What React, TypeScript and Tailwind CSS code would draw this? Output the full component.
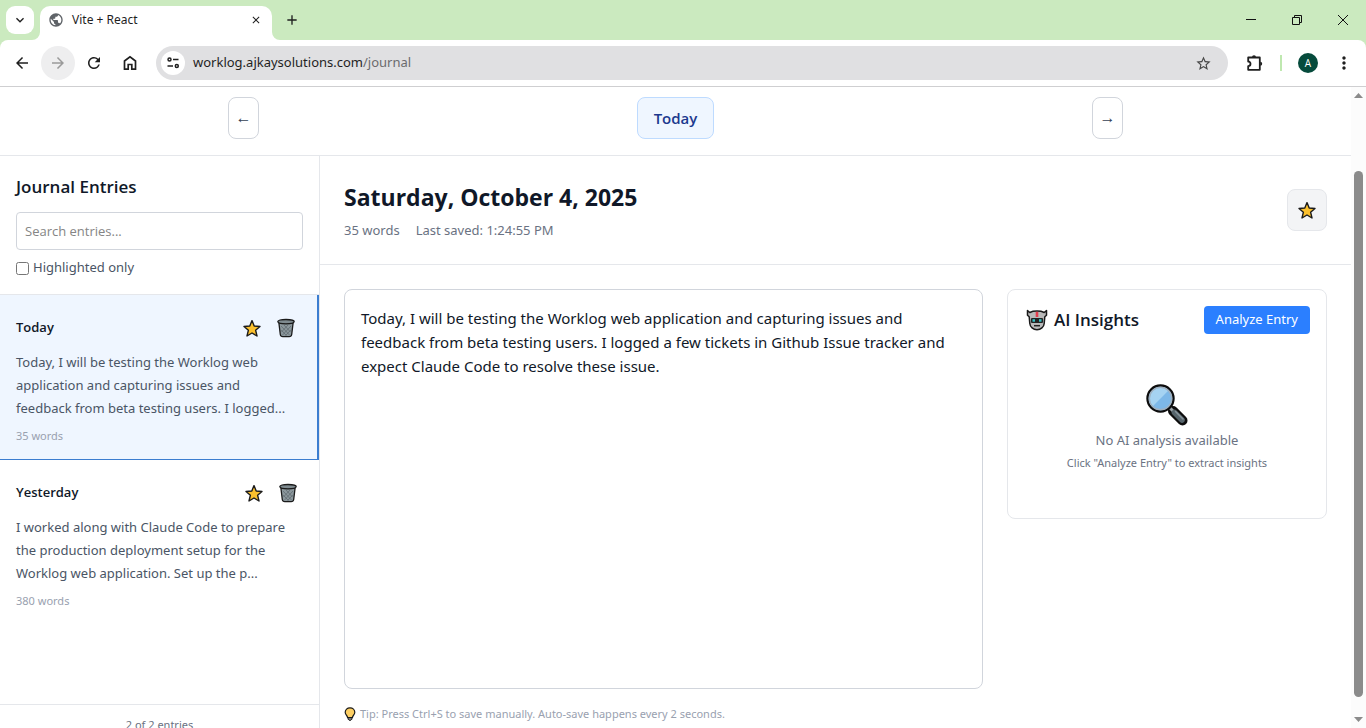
import { useState } from "react";
import {
  MdArrowBack,
  MdArrowForward,
  MdRefresh,
  MdMoreVert,
  MdPublic,
  MdStarBorder,
  MdAdd,
  MdClose,
  MdKeyboardArrowDown,
} from "react-icons/md";

function StarIcon({ className = "size-5" }: { className?: string }) {
  return (
    <svg viewBox="0 0 20 20" className={className} aria-hidden="true">
      <path
        d="M10 2.600 12.200 8 18 8.500 13.600 12.200 15 18 10 15 5 18 6.400 12.200 2 8.500 7.800 8Z"
        fill="#fbc02d"
        stroke="#1a1a1a"
        strokeWidth="1.4"
        strokeLinejoin="round"
      />
    </svg>
  );
}

function TrashIcon() {
  return (
    <svg viewBox="0 0 20 20" className="size-5" aria-hidden="true">
      <path d="M2.900 5 4.300 16.500c.2 1.300 1.200 2.100 2.500 2.100h6.400c1.300 0 2.300-.8 2.500-2.100L17.100 5Z" fill="#8b979c" stroke="#1a1a1a" strokeWidth="1.300" />
      <path d="m5 8 8.500 9M8 7l6.500 7M5.200 12l5.200 5.500M15 8l-8.500 9M12 7l-6.500 7M14.800 12l-5.200 5.500" stroke="#5b666b" strokeWidth=".7" fill="none" />
      <path d="M1.800 3.600C1.800 2.300 5 1.500 10 1.500s8.200.8 8.200 2.100c0 1.400-2.500 2.200-8.200 2.200s-8.200-.8-8.200-2.200Z" fill="#7f8b90" stroke="#1a1a1a" strokeWidth="1.300" />
    </svg>
  );
}

function RobotIcon() {
  return (
    <svg viewBox="0 0 22 22" className="size-[22px]" aria-hidden="true">
      <path
        d="M1.500 1.600v4.600l1.700 1.600.6 6.700c.3 3.500 3.400 6.200 7.200 6.200s6.900-2.700 7.200-6.200l.6-6.700 1.700-1.600V1.600l-2.300 1.900C16 2.400 13.800 2.100 11 2.100s-5 .3-7.200 1.400Z"
        fill="#b9b9b9"
        stroke="#1a1a1a"
        strokeWidth="1.500"
        strokeLinejoin="round"
      />
      <path d="M11 2.800v5.200" stroke="#e53e4e" strokeWidth="2.600" />
      <rect x="5" y="9" width="12" height="5" rx="1" fill="#222" />
      <rect x="6.500" y="10.200" width="2.500" height="2.500" fill="#35c3c8" />
      <rect x="13" y="10.200" width="2.500" height="2.500" fill="#35c3c8" />
      <path d="M8 16.700h6" stroke="#222" strokeWidth="1.500" />
    </svg>
  );
}

function MagnifierIcon() {
  return (
    <svg viewBox="0 0 42 42" className="size-[42px]" aria-hidden="true">
      <path d="m27 27 9.500 9.500" stroke="#0d0d0d" strokeWidth="10" strokeLinecap="round" />
      <path d="m22 22 5 5" stroke="#0d0d0d" strokeWidth="6" />
      <path d="m22.500 22.500 5 5" stroke="#9aa3a8" strokeWidth="3" />
      <path d="m28.500 28.500 7.500 7.500" stroke="#56646b" strokeWidth="5.600" strokeLinecap="round" />
      <path d="m29.500 27.500 7.500 7.500" stroke="#859299" strokeWidth="1.500" strokeLinecap="round" />
      <circle cx="14.500" cy="14.500" r="13" fill="#7db8e8" stroke="#0d0d0d" strokeWidth="2.400" />
      <path d="M6.300 22.700A11.600 11.600 0 0 1 22.700 6.300Z" fill="#a5d3f2" />
      <circle cx="14.500" cy="14.500" r="11.200" fill="none" stroke="#9fb0bf" strokeWidth="1.500" />
    </svg>
  );
}

function BulbIcon() {
  return (
    <svg viewBox="0 0 12 14" className="h-3.5 w-3" aria-hidden="true">
      <path
        d="M6 .8C3.200.800 1.200 2.800 1.200 5.300c0 2.200 1.900 3.100 2.400 5.200h4.800c.5-2.100 2.400-3 2.400-5.200C10.800 2.800 8.800.8 6 .8Z"
        fill="#fdcf63"
        stroke="#1a1a1a"
        strokeWidth="1.200"
      />
      <path d="M4 10.500h4v1.600L6.800 13.300H5.200L4 12.100Z" fill="#777" stroke="#1a1a1a" strokeWidth="1" />
    </svg>
  );
}

function HomeIcon() {
  return (
    <svg viewBox="0 0 18 18" className="size-[18px]" fill="none" stroke="#1f1f1f" strokeWidth="1.700" aria-hidden="true">
      <path d="M3.500 7v8.200h3.700v-4.700h3.600v4.700h3.700V7L9 2.800Z" />
    </svg>
  );
}

function SiteIcon() {
  return (
    <svg viewBox="0 0 16 16" className="size-4" fill="none" stroke="#1f1f1f" strokeWidth="1.500" aria-hidden="true">
      <circle cx="4.500" cy="4.500" r="1.500" />
      <path d="M8 4.500h5.500M2.500 11h5.500" />
      <circle cx="11.800" cy="11" r="1.500" />
    </svg>
  );
}

function PuzzleIcon() {
  return (
    <svg viewBox="0 0 20 20" className="size-5" aria-hidden="true">
      <path d="M3.200 4.500h11.600v12.300H3.200v-3.700a2.200 2.200 0 0 0 0-4.600Z" fill="none" stroke="#1f1f1f" strokeWidth="1.800" strokeLinejoin="round" />
      <path d="M7 4.200a2 2 0 0 1 4 0ZM15.200 8.800a2 2 0 0 1 0 4Z" fill="#1f1f1f" />
    </svg>
  );
}

function TabStrip() {
  return (
    <div className="flex h-10 shrink-0 items-end justify-between bg-[#cbeabf]">
      <div className="flex h-[34px] pl-1.5">
        <button aria-label="Search tabs" className="flex size-7 items-center justify-center rounded-[9px] bg-white">
          <MdKeyboardArrowDown className="size-4 text-[#1f1f1f]" />
        </button>
        <div className="relative ml-1.5 flex w-[232px] items-center rounded-t-[10px] bg-white pr-2.5 pb-1.5 pl-2">
          <svg viewBox="0 0 8 8" className="absolute bottom-0 -left-2 size-2" aria-hidden="true">
            <path d="M8 0v8H0a8 8 0 0 0 8-8" fill="#fff" />
          </svg>
          <svg viewBox="0 0 8 8" className="absolute -right-2 bottom-0 size-2" aria-hidden="true">
            <path d="M0 0v8h8A8 8 0 0 1 0 0" fill="#fff" />
          </svg>
          <MdPublic className="size-4 text-[#5f6368]" />
          <span className="ml-2 grow font-['Noto_Sans',sans-serif] text-[12px] text-[#1f1f1f]">Vite + React</span>
          <button aria-label="Close tab">
            <MdClose className="size-3 text-[#1f1f1f]" />
          </button>
        </div>
        <button aria-label="New tab" className="ml-3 flex h-7 items-center">
          <MdAdd className="size-4 text-[#1f1f1f]" />
        </button>
      </div>
      <div className="flex h-10 text-[#111]">
        <button aria-label="Minimize" className="flex w-[46px] items-center justify-center">
          <svg viewBox="0 0 10 10" className="size-2.5" stroke="currentColor"><path d="M0 4.500h10" /></svg>
        </button>
        <button aria-label="Restore" className="flex w-[46px] items-center justify-center">
          <svg viewBox="0 0 10 10" className="size-2.5" stroke="currentColor" fill="none"><path d="M.5 2.500h7v7h-7ZM2.500 2.500v-2h7v7h-2" /></svg>
        </button>
        <button aria-label="Close" className="flex w-[46px] items-center justify-center">
          <svg viewBox="0 0 10 10" className="size-2.5" stroke="currentColor"><path d="m0 0 10 10M10 0 0 10" /></svg>
        </button>
      </div>
    </div>
  );
}

function Toolbar() {
  return (
    <div className="shrink-0 bg-[#cbeabf]">
      <div className="flex h-[47px] items-center rounded-t-lg border-b border-[#cfcfd1] bg-white pr-3 pl-[5px] text-[#1f1f1f]">
        <button aria-label="Back" className="flex size-[34px] items-center justify-center">
          <MdArrowBack className="size-[18px]" />
        </button>
        <button aria-label="Forward" className="ml-0.5 flex size-[34px] items-center justify-center rounded-full bg-[#eeeeef] text-[#9a9a9a]">
          <MdArrowForward className="size-[18px]" />
        </button>
        <button aria-label="Reload" className="ml-0.5 flex size-[34px] items-center justify-center">
          <MdRefresh className="size-[18px]" />
        </button>
        <button aria-label="Home" className="ml-0.5 flex size-[34px] items-center justify-center">
          <HomeIcon />
        </button>
        <div className="ml-[9px] flex h-[34px] grow items-center rounded-full bg-[#e0e0e2] pr-4 pl-[5px]">
          <button aria-label="Site information" className="flex size-6 items-center justify-center rounded-full bg-white">
            <SiteIcon />
          </button>
          <a href="/journal" className="ml-2 grow font-['Noto_Sans',sans-serif] text-[13px] text-[#1f1f1f]">
            worklog.ajkaysolutions.com<span className="text-[#6b6b6e]">/journal</span>
          </a>
          <button aria-label="Bookmark">
            <MdStarBorder className="size-[17px] text-[#474747]" />
          </button>
        </div>
        <button aria-label="Extensions" className="ml-[17px]">
          <PuzzleIcon />
        </button>
        <span className="ml-[15px] h-4 w-0.5 bg-[#bfe8b0]" />
        <button aria-label="Profile" className="ml-4 flex size-5 items-center justify-center rounded-full bg-[#064b3c] text-[10px] text-white">
          A
        </button>
        <button aria-label="Menu" className="ml-4">
          <MdMoreVert className="size-5" />
        </button>
      </div>
    </div>
  );
}

const entries = [
  {
    day: "Today",
    text: ["Today, I will be testing the Worklog web", "application and capturing issues and", "feedback from beta testing users. I logged..."],
    words: 35,
    active: true,
  },
  {
    day: "Yesterday",
    text: ["I worked along with Claude Code to prepare", "the production deployment setup for the", "Worklog web application. Set up the p..."],
    words: 380,
    active: false,
  },
];

function Sidebar() {
  const [query, setQuery] = useState("");
  return (
    <aside className="flex w-80 shrink-0 flex-col border-r border-gray-200">
      <div className="border-b border-gray-200 p-4">
        <h2 className="text-[17px] leading-[30px] font-semibold text-gray-900">Journal Entries</h2>
        <input
          type="text"
          aria-label="Search entries"
          placeholder="Search entries..."
          value={query}
          onChange={(e) => setQuery(e.target.value)}
          className="mt-2.5 block h-[38px] w-full rounded border border-gray-300 px-2 text-[13px] placeholder:text-[#858585]"
        />
        <label className="mt-2 flex h-5 items-center gap-1 font-['Noto_Sans',sans-serif] text-[13px] text-gray-600">
          <input type="checkbox" className="size-[13px]" />
          Highlighted only
        </label>
      </div>
      <ul className="grow">
        {entries.map((entry) => (
          <li
            key={entry.day}
            className={
              entry.active
                ? "border-r-2 border-b border-[#3b7dd0] bg-blue-50 px-4 pt-4 pb-[15px]"
                : "px-4 pt-4 pb-[15px]"
            }
          >
            <div className="flex h-[33px] items-center justify-between">
              <h3 className="text-[13px] font-semibold text-gray-900">{entry.day}</h3>
              <div className="flex gap-1.5 pr-px">
                <button aria-label="Highlight entry" className="flex h-8 w-7 items-center justify-center">
                  <StarIcon />
                </button>
                <button aria-label="Delete entry" className="flex h-8 w-7 items-center justify-center">
                  <TrashIcon />
                </button>
              </div>
            </div>
            <p className="mt-[7px] font-['Noto_Sans',sans-serif] text-[13px] leading-[23px] whitespace-pre text-gray-600">
              {entry.text.join("\n")}
            </p>
            <p className="mt-2 font-['Noto_Sans',sans-serif] text-[11px] leading-4 text-gray-400">{entry.words} words</p>
          </li>
        ))}
      </ul>
      <div className="border-t border-gray-200 p-3 text-center font-['Noto_Sans',sans-serif] text-[11px] leading-4 text-gray-500">
        2 of 2 entries
      </div>
    </aside>
  );
}

function Insights() {
  return (
    <section className="h-[230px] w-80 shrink-0 rounded-lg border border-gray-200 p-4">
      <div className="flex h-7 items-center justify-between">
        <h3 className="flex items-center gap-1.5 pl-0.5 text-[17px] font-semibold text-gray-900">
          <RobotIcon />
          AI Insights
        </h3>
        <button className="h-7 rounded bg-[#2b7fff] px-3 font-['Noto_Sans',sans-serif] text-[13px] text-white">Analyze Entry</button>
      </div>
      <div className="mt-[50px] flex flex-col items-center font-['Noto_Sans',sans-serif] text-gray-500">
        <MagnifierIcon />
        <p className="mt-1 text-[13px] leading-5">No AI analysis available</p>
        <p className="mt-1 text-[11px] leading-[18px]">Click "Analyze Entry" to extract insights</p>
      </div>
    </section>
  );
}

function Editor() {
  const [text, setText] = useState(
    "Today, I will be testing the Worklog web application and capturing issues and\nfeedback from beta testing users. I logged a few tickets in Github Issue tracker and\nexpect Claude Code to resolve these issue.",
  );
  return (
    <section className="min-w-0 grow">
      <div className="flex items-center justify-between border-b border-gray-200 p-6">
        <div>
          <h1 className="text-[23px] leading-[34px] font-bold text-gray-900">Saturday, October 4, 2025</h1>
          <div className="mt-1.5 flex gap-4 font-['Noto_Sans',sans-serif] text-[13px] leading-5 text-gray-500">
            <span>35 words</span>
            <span>Last saved: 1:24:55 PM</span>
          </div>
        </div>
        <button aria-label="Toggle highlight" className="flex h-[42px] w-10 items-center justify-center rounded-lg border border-gray-200 bg-gray-100">
          <StarIcon />
        </button>
      </div>
      <div className="flex items-start gap-6 p-6">
        <div className="grow">
          <textarea
            aria-label="Journal entry"
            spellCheck={false}
            value={text}
            onChange={(e) => setText(e.target.value)}
            className="block h-[400px] w-full resize-none rounded-lg border border-gray-300 p-4 font-['Noto_Sans',sans-serif] text-[15px] leading-6 text-gray-900"
          />
          <p className="mt-4 flex items-center gap-1 font-['Noto_Sans',sans-serif] text-[11px] leading-[18px] text-gray-400">
            <BulbIcon />
            Tip: Press Ctrl+S to save manually. Auto-save happens every 2 seconds.
          </p>
        </div>
        <Insights />
      </div>
    </section>
  );
}

function Scrollbar() {
  return (
    <div className="flex w-[15px] shrink-0 flex-col items-center bg-[#fcfcfc] py-1.5" aria-hidden="true">
      <svg viewBox="0 0 9 5" className="h-[5px] w-[9px]" fill="#8b8b8b"><path d="M4.500 0 9 5H0Z" /></svg>
      <div className="mt-[73px] mb-5 w-[9px] grow rounded-full bg-[#8b8b8b]" />
      <svg viewBox="0 0 9 5" className="h-[5px] w-[9px]" fill="#8b8b8b"><path d="M0 0h9L4.500 5Z" /></svg>
    </div>
  );
}

export default function App() {
  return (
    <div className="flex h-screen flex-col overflow-hidden bg-white font-['Open_Sans','Noto_Sans',sans-serif]">
      <TabStrip />
      <Toolbar />
      <div className="flex min-h-0 grow">
        <div className="flex min-w-0 grow flex-col overflow-hidden">
          <nav className="shrink-0 border-b border-gray-200 px-4 pt-2.5 pb-4">
            <div className="mx-auto flex max-w-[895px] items-center justify-between">
              <button aria-label="Previous day" className="h-[42px] w-[31px] rounded-lg border border-gray-300 font-['Liberation_Sans',sans-serif] text-[16px] text-gray-700">
                ←
              </button>
              <button className="h-[42px] rounded-lg border border-[#bedbff] bg-blue-50 px-4 text-[15px] font-semibold text-[#1c398e]">Today</button>
              <button aria-label="Next day" className="h-[42px] w-[31px] rounded-lg border border-gray-300 font-['Liberation_Sans',sans-serif] text-[16px] text-gray-700">
                →
              </button>
            </div>
          </nav>
          <main className="-mb-[17px] flex min-h-0 grow">
            <Sidebar />
            <Editor />
          </main>
        </div>
        <Scrollbar />
      </div>
    </div>
  );
}
